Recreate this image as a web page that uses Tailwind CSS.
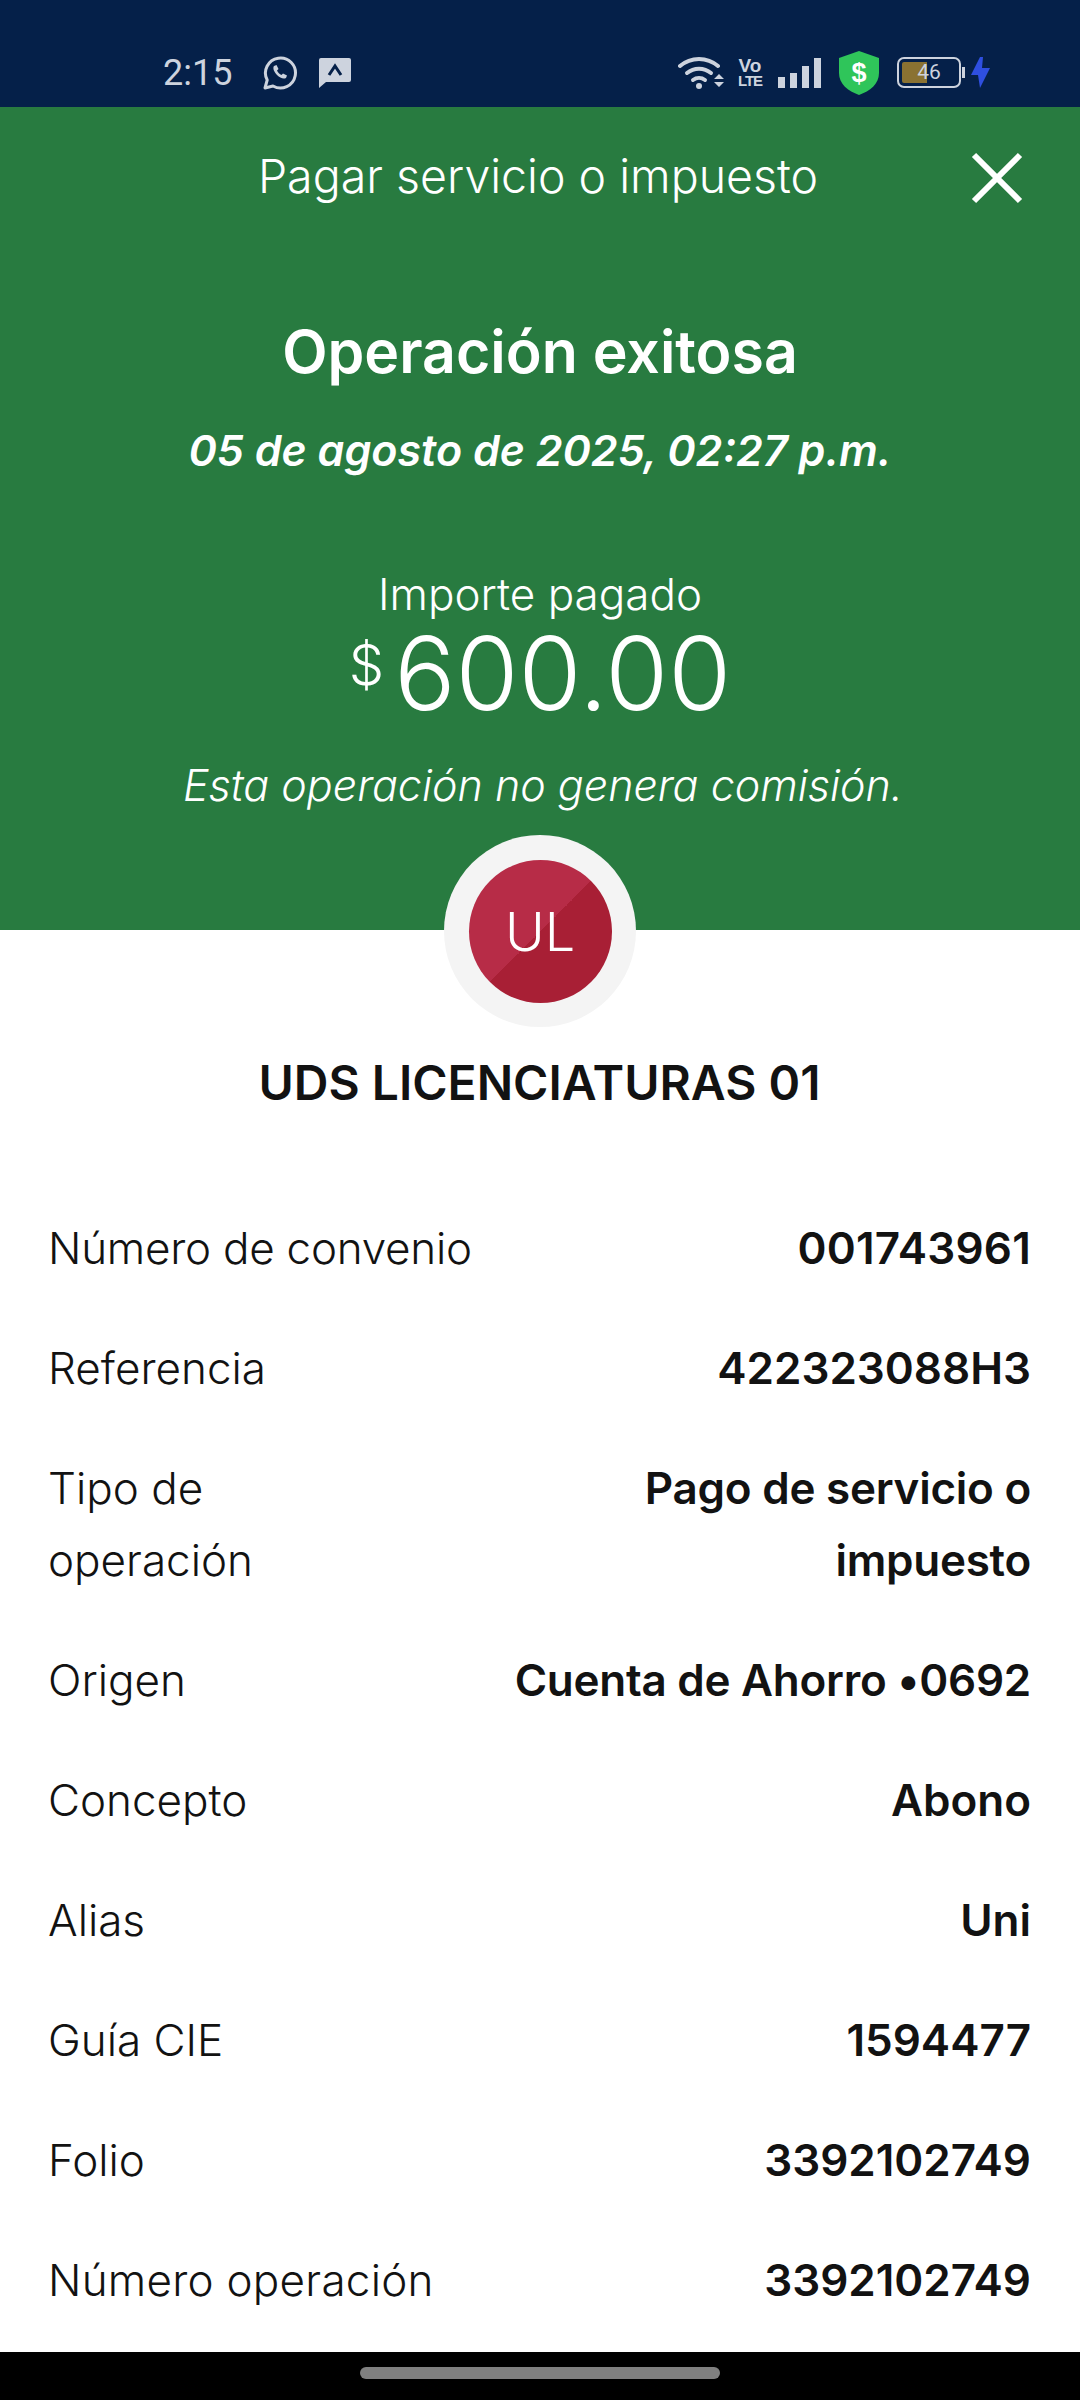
<!DOCTYPE html>
<html lang="es">
<head>
<meta charset="UTF-8">
<title>Pagar servicio o impuesto</title>
<script src="https://cdn.jsdelivr.net/npm/@tailwindcss/browser@4"></script>
</head>
<body class="bg-white font-['Inter',sans-serif]">
<div class="w-[1080px] h-[2400px] flex flex-col overflow-hidden">

  <!-- status bar -->
  <div class="h-[107px] shrink-0 bg-[#052049] flex items-center pt-[38px] pl-[163px] pr-[90px] text-[#cdd3de]">
    <span class="text-[36px] font-['Roboto',sans-serif]">2:15</span>
    <svg class="ml-[30px] w-[36px] h-[36px]" viewBox="0 0 36 36" fill="none" stroke="#cdd3de" stroke-width="3">
      <path d="M3 33l2.200-8A15 15 0 1 1 11 31z" stroke-linejoin="round"/>
      <path d="M12 11c-1.500 2 0 6 3 9s6.500 4.500 9 3l1-2.500-4-2-1.500 1.500c-2-.8-3.500-2.500-4.500-4.500l1.500-1.500-2-4z" fill="#cdd3de" stroke="none"/>
    </svg>
    <svg class="ml-[20px] w-[34px] h-[32px]" viewBox="0 0 34 32">
      <path d="M3 1h28a2 2 0 0 1 2 2v20a2 2 0 0 1-2 2H8l-7 6V3a2 2 0 0 1 2-2z" fill="#cdd3de"/>
      <path d="M11 18l6-9 6 9" fill="none" stroke="#052049" stroke-width="3"/>
    </svg>

    <div class="ml-auto flex items-center">
      <svg class="w-[46px] h-[36px]" viewBox="0 0 46 36" fill="none" stroke="#cdd3de" stroke-width="4" stroke-linecap="round">
        <path d="M2 11a29 29 0 0 1 38 0"/>
        <path d="M9 18a19 19 0 0 1 24 0"/>
        <path d="M15 25a10 10 0 0 1 12 0"/>
        <circle cx="21" cy="31" r="3" fill="#cdd3de" stroke="none"/>
        <path d="M36 24l5-5 5 5zM36 27l5 5 5-5z" fill="#cdd3de" stroke="none"/>
      </svg>
      <div class="ml-[14px] w-[24px] flex flex-col items-center leading-none font-bold font-['Liberation_Sans',sans-serif]">
        <span class="h-[16px] text-[19px] leading-[16px]">Vo</span>
        <span class="h-[14px] text-[15px] leading-[14px] tracking-[-1px]">LTE</span>
      </div>
      <div class="ml-[16px] flex items-end gap-[5px] h-[30px]">
        <div class="w-[7px] h-[11px] bg-[#cdd3de]"></div>
        <div class="w-[7px] h-[15px] bg-[#cdd3de]"></div>
        <div class="w-[7px] h-[22px] bg-[#cdd3de]"></div>
        <div class="w-[7px] h-[30px] bg-[#cdd3de]"></div>
      </div>
      <svg class="ml-[18px] w-[40px] h-[44px]" viewBox="0 0 40 44">
        <path d="M20 0l20 7v15c0 11-9 18-20 22C9 40 0 33 0 22V7z" fill="#2fc55a"/>
        <text x="20" y="31" text-anchor="middle" font-size="27" font-weight="700" fill="#fff" font-family="Liberation Sans">$</text>
      </svg>
      <div class="ml-[18px] relative w-[64px] h-[31px] border-[2px] border-[#cdd3de] rounded-[7px] overflow-hidden">
        <div class="absolute left-[3px] top-[3px] bottom-[3px] w-[25px] bg-[#8a7232] rounded-l-[2px]"></div>
        <span class="absolute inset-0 flex items-center justify-center text-[21px] font-['Roboto',sans-serif] leading-none">46</span>
      </div>
      <div class="w-[3px] h-[11px] ml-[1px] bg-[#cdd3de]"></div>
      <svg class="ml-[6px] w-[19px] h-[31px]" viewBox="0 0 19 31"><path d="M9 0L0 18h7l2 13L19 11h-8l1-11z" fill="#2f4fe0"/></svg>
    </div>
  </div>

  <!-- green header -->
  <div class="h-[823px] shrink-0 bg-[#287b40] text-white relative flex flex-col items-center">
    <div class="relative w-full h-[140px] flex items-center justify-center">
      <span class="text-[46.500px] font-light mr-[4px]">Pagar servicio o impuesto</span>
      <svg class="absolute left-[971px] top-[45px] w-[52px] h-[52px]" viewBox="0 0 52 52" stroke="#fff" stroke-width="6" fill="none">
        <path d="M3 3l46 46M49 3L3 49"/>
      </svg>
    </div>
    <h1 class="mt-[70px] text-[59px] leading-[70px] font-semibold">Operación exitosa</h1>
    <p class="mt-[35px] text-[43px] leading-[56px] font-semibold italic">05 de agosto de 2025, 02:27 p.m.</p>
    <p class="mt-[89px] text-[44px] leading-[54px] font-light">Importe pagado</p>
    <div class="flex items-start h-[104px]">
      <span class="text-[56px] leading-[56px] font-light mr-[10px] mt-[16px]">$</span>
      <span class="text-[102px] leading-[104px] font-light">600.00</span>
    </div>
    <p class="mt-[32px] ml-[6px] text-[43px] leading-[56px] font-light italic">Esta operación no genera comisión.</p>

    <!-- avatar sits over the green edge -->
    <div class="absolute left-[444px] top-[728px] w-[192px] h-[192px] rounded-full bg-[#f4f4f4] flex items-center justify-center">
      <div class="w-[143px] h-[143px] rounded-full flex items-center justify-center text-white text-[54px] font-light bg-[linear-gradient(135deg,#b72c47_50%,#a81f35_50%)]">UL</div>
    </div>
  </div>

  <!-- details -->
  <div class="flex-1 bg-white pl-[48px] pr-[49px] text-[#121212]">
    <h2 class="mt-[123px] text-center text-[48px] leading-[60px] font-semibold">UDS LICENCIATURAS 01</h2>
    <dl class="mt-[99px] text-[44px] leading-[72px]">
      <div class="flex justify-between h-[120px]"><dt class="font-light tracking-[-0.25px]">Número de convenio</dt><dd class="font-semibold tracking-[0.2px]">001743961</dd></div>
      <div class="flex justify-between h-[120px]"><dt class="font-light">Referencia</dt><dd class="font-semibold">422323088H3</dd></div>
      <div class="flex justify-between h-[192px]"><dt class="font-light w-[260px]">Tipo de operación</dt><dd class="font-semibold text-right w-[450px] tracking-[-0.25px]">Pago de servicio o impuesto</dd></div>
      <div class="flex justify-between h-[120px]"><dt class="font-light">Origen</dt><dd class="font-semibold tracking-[-0.25px]">Cuenta de Ahorro •0692</dd></div>
      <div class="flex justify-between h-[120px]"><dt class="font-light">Concepto</dt><dd class="font-semibold">Abono</dd></div>
      <div class="flex justify-between h-[120px]"><dt class="font-light">Alias</dt><dd class="font-semibold">Uni</dd></div>
      <div class="flex justify-between h-[120px]"><dt class="font-light">Guía CIE</dt><dd class="font-semibold">1594477</dd></div>
      <div class="flex justify-between h-[120px]"><dt class="font-light">Folio</dt><dd class="font-semibold">3392102749</dd></div>
      <div class="flex justify-between h-[72px]"><dt class="font-light tracking-[0.25px]">Número operación</dt><dd class="font-semibold">3392102749</dd></div>
    </dl>
  </div>

  <!-- nav bar -->
  <div class="h-[48px] shrink-0 bg-black flex justify-center pt-[15px]">
    <div class="w-[360px] h-[12px] rounded-full bg-[#808080]"></div>
  </div>
</div>
</body>
</html>
